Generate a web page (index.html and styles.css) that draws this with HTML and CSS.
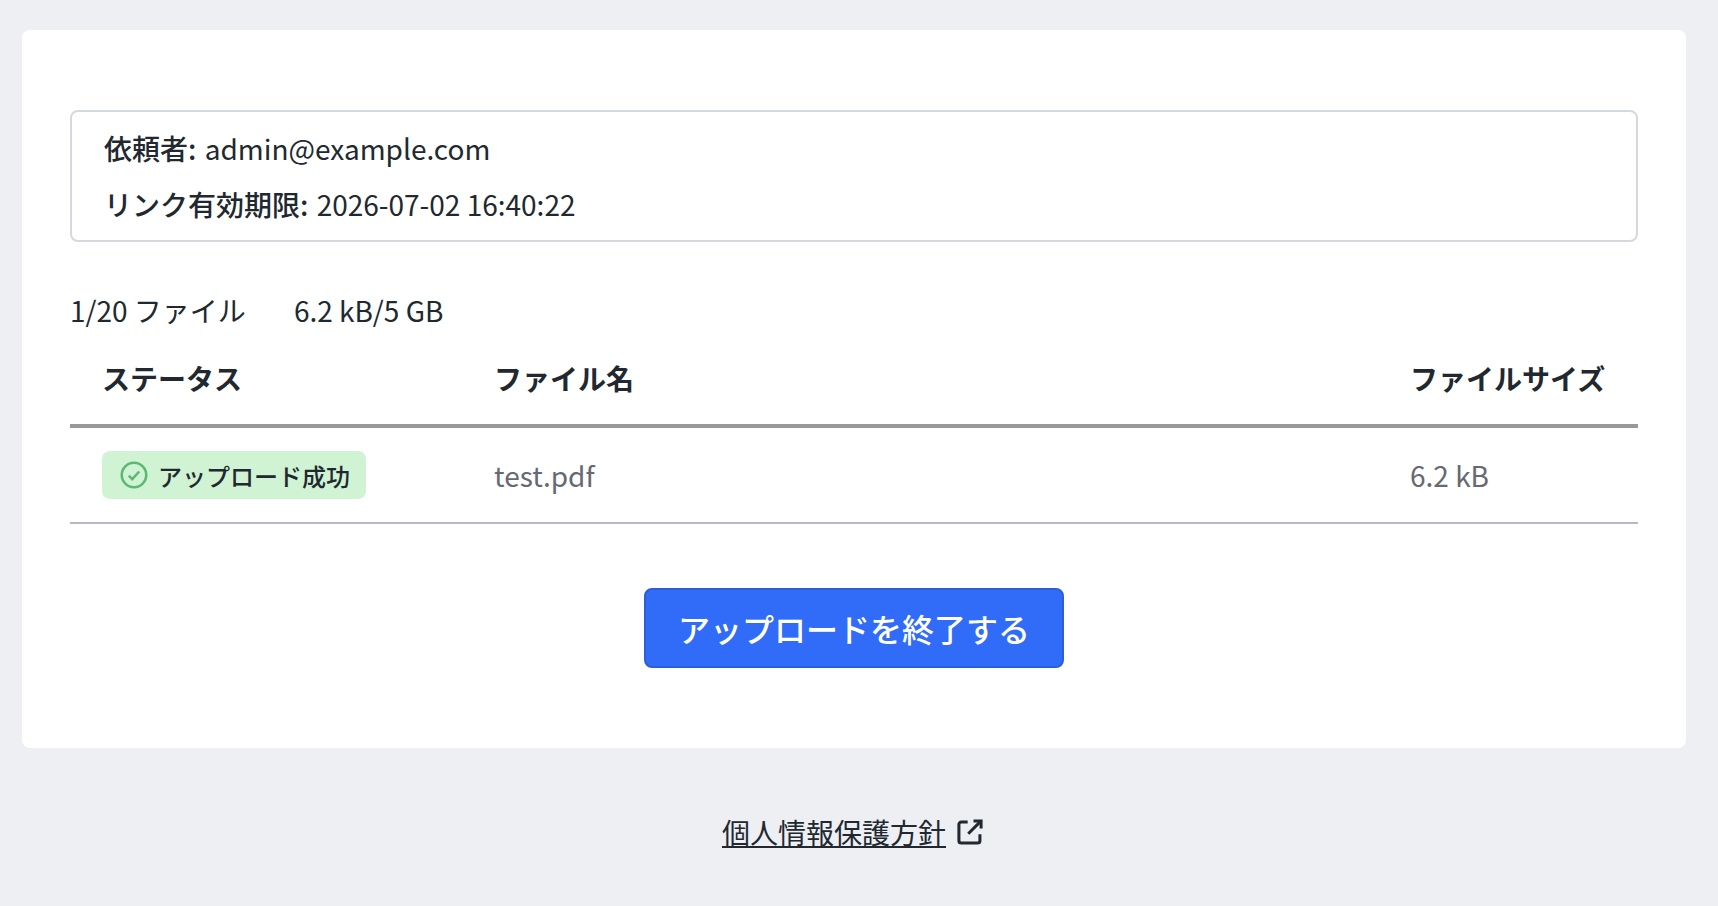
FILE: index.html
```html
<!DOCTYPE html>
<html lang="ja">
<head>
  <meta charset="UTF-8">
  <title>ファイルアップロード</title>
  <link rel="stylesheet" href="styles.css">
</head>
<body>

  <main class="card">
    <div class="info-box">
      <p><span class="info-label">依頼者:</span> admin@example.com</p>
      <p><span class="info-label">リンク有効期限:</span> 2026-07-02 16:40:22</p>
    </div>

    <div class="summary">
      <span>1/20 ファイル</span>
      <span>6.2 kB/5 GB</span>
    </div>

    <table class="file-table">
      <thead>
        <tr>
          <th class="col-status">ステータス</th>
          <th>ファイル名</th>
          <th class="col-size">ファイルサイズ</th>
        </tr>
      </thead>
      <tbody>
        <tr>
          <td>
            <span class="badge">
              <svg class="badge-icon" viewBox="0 0 24 24" fill="none">
                <circle cx="12" cy="12" r="10.5"/>
                <path d="M7.5 12.5l3 3 6-6.5"/>
              </svg>
              アップロード成功
            </span>
          </td>
          <td>test.pdf</td>
          <td>6.2 kB</td>
        </tr>
      </tbody>
    </table>

    <div class="button-row">
      <button class="finish-btn">アップロードを終了する</button>
    </div>
  </main>

  <footer class="footer">
    <a href="#">個人情報保護方針</a>
    <svg class="external-icon" viewBox="0 0 24 24" fill="none">
      <path d="M10 3.5H4.5a2 2 0 0 0-2 2v14a2 2 0 0 0 2 2h14a2 2 0 0 0 2-2V14"/>
      <path d="M15 2.5h6.5V9"/>
      <path d="M21.5 2.5L10.5 13.5"/>
    </svg>
  </footer>

</body>
</html>
```

FILE: styles.css
```css
* {
  box-sizing: border-box;
}

body {
  margin: 0;
  min-height: 100vh;
  padding: 30px 32px 0 22px;
  background: #edeff3;
  color: #212830;
  font-family: "Noto Sans CJK JP", "Noto Sans", sans-serif;
  font-size: 28px;
}

.card {
  height: 718px;
  padding: 80px 48px 0;
  background: white;
  border-radius: 8px;
}

.info-box {
  height: 132px;
  padding: 8px 32px;
  border: 2px solid #d5d9df;
  border-radius: 8px;
  font-size: 28px;
}

.info-box p {
  margin: 0;
  height: 56px;
  line-height: 56px;
}

.info-label {
  margin-right: 2px;
  font-weight: 500;
}

.summary {
  display: flex;
  gap: 48px;
  margin-top: 48px;
  line-height: 40px;
}

.file-table {
  width: 100%;
  margin-top: 10px;
  border-collapse: collapse;
  table-layout: fixed;
}

.file-table th {
  height: 86px;
  padding: 0 32px 9px;
  border-bottom: 4px solid #999999;
  text-align: left;
  font-weight: 700;
}

.file-table td {
  height: 97px;
  padding: 0 32px;
  border-bottom: 2px solid #b6b8c5;
  color: #66696f;
}

.col-status {
  width: 392px;
}

.col-size {
  width: 260px;
}

.badge {
  display: inline-flex;
  align-items: center;
  gap: 10px;
  height: 48px;
  padding: 0 16px 0 18px;
  background: #d0f3d4;
  border-radius: 8px;
  color: #212830;
  font-size: 24px;
  font-weight: 500;
}

.badge-icon {
  width: 28px;
  height: 28px;
  stroke: #5bb974;
  stroke-width: 2.2;
}

.button-row {
  display: flex;
  justify-content: center;
  margin-top: 64px;
}

.finish-btn {
  width: 420px;
  height: 80px;
  background: #306cf8;
  border: 2px solid #2a5fd8;
  border-radius: 8px;
  color: white;
  font-family: inherit;
  font-size: 32px;
  font-weight: 500;
}

.footer {
  display: flex;
  justify-content: center;
  align-items: center;
  gap: 10px;
  margin-top: 64px;
  margin-right: 2px;
}

.footer a {
  color: inherit;
}

.external-icon {
  width: 28px;
  height: 28px;
  stroke: #212830;
  stroke-width: 2.6;
}
```
